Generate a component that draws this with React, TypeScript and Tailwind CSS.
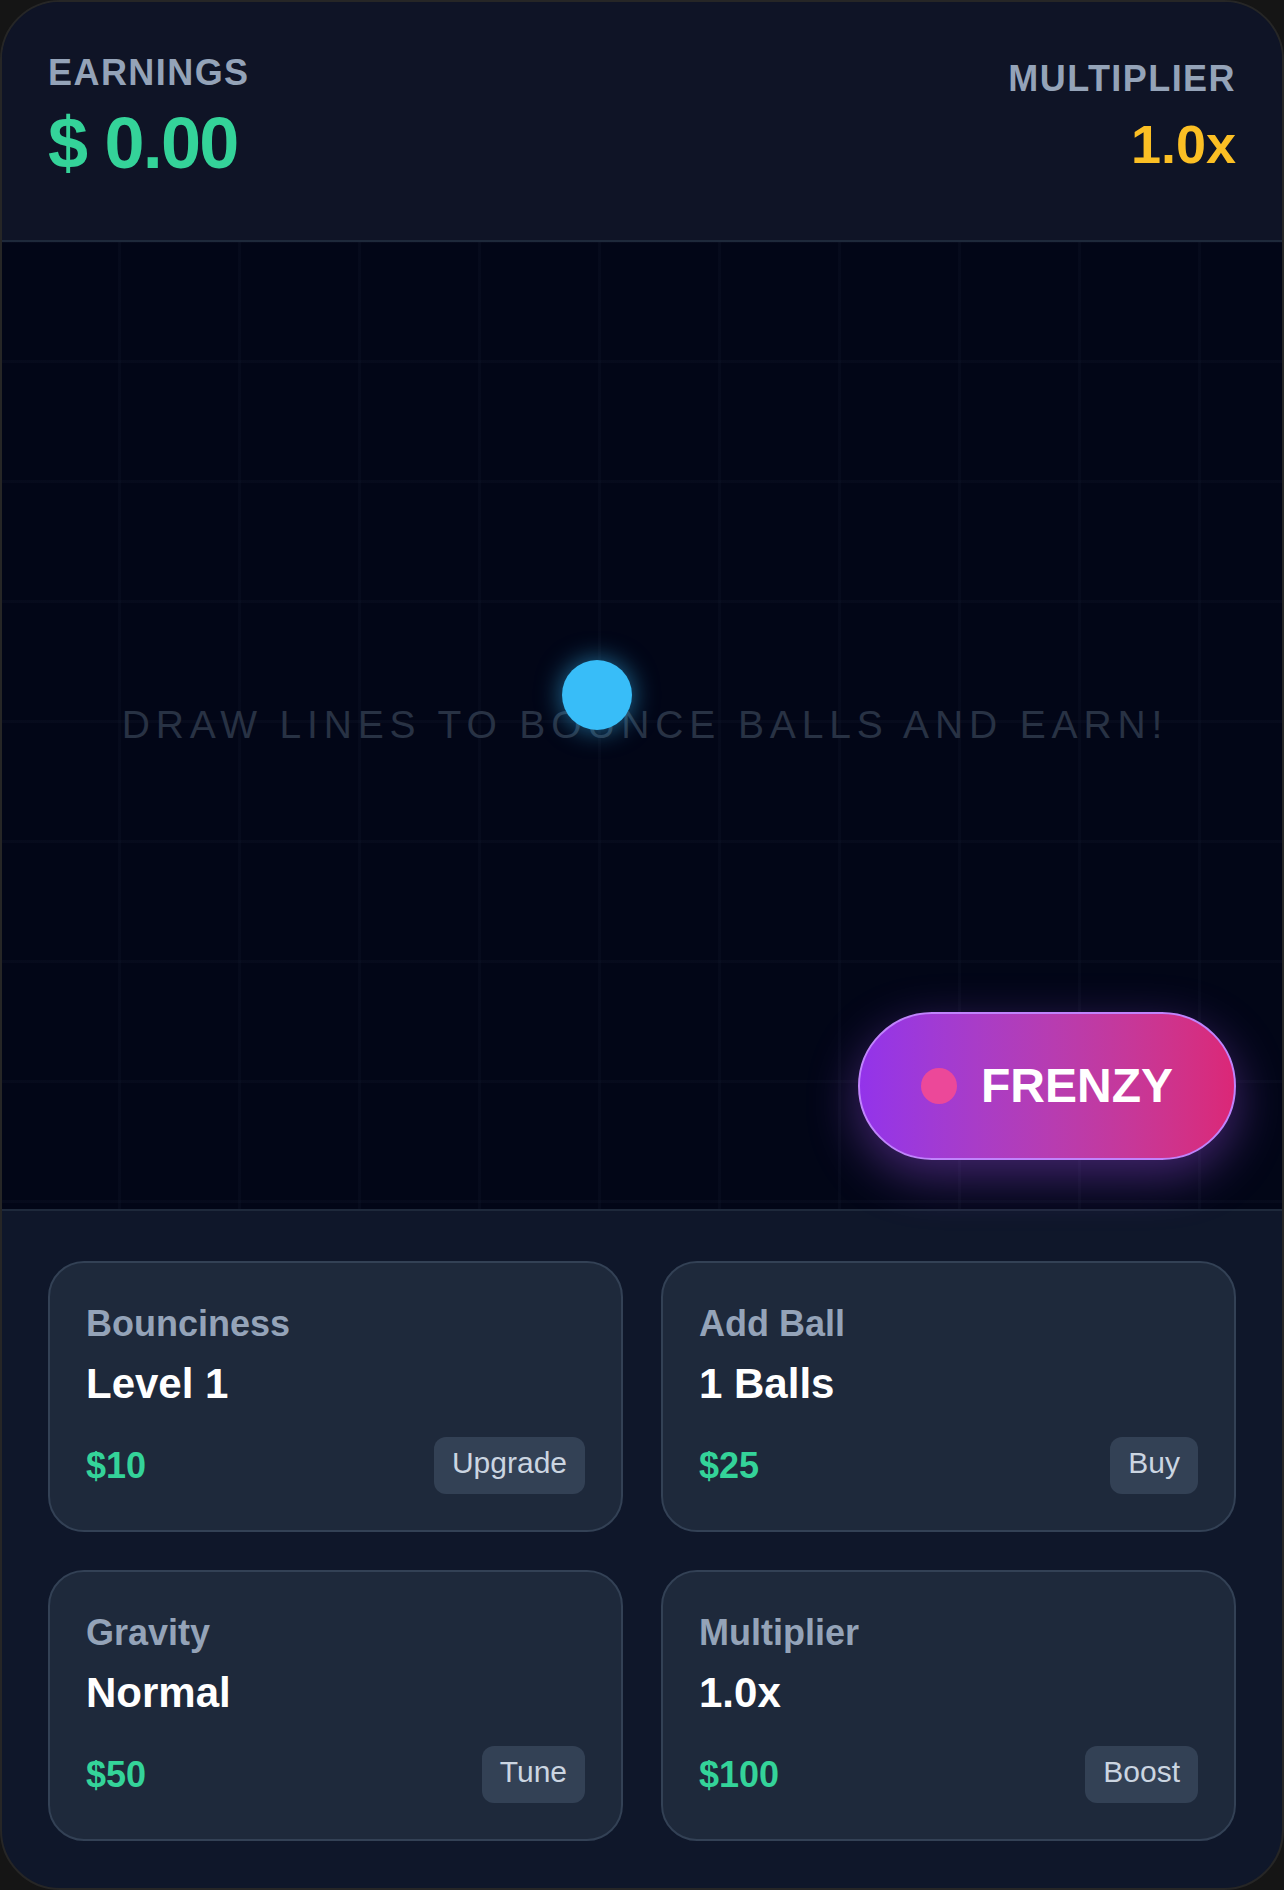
const FONT = { fontFamily: '"Liberation Sans", Arial, sans-serif' };

type Upgrade = {
  label: string;
  value: string;
  price: string;
  action: string;
};

const UPGRADES: Upgrade[] = [
  { label: 'Bounciness', value: 'Level 1', price: '$10', action: 'Upgrade' },
  { label: 'Add Ball', value: '1 Balls', price: '$25', action: 'Buy' },
  { label: 'Gravity', value: 'Normal', price: '$50', action: 'Tune' },
  { label: 'Multiplier', value: '1.0x', price: '$100', action: 'Boost' },
];

function UpgradeCard({ upgrade }: { upgrade: Upgrade }) {
  return (
    <div className="flex flex-col rounded-[36px] border-2 border-[#334155] bg-[#1e293b] px-[36px] pb-[36px] pt-[41px]">
      <div className="text-[36px] font-bold leading-[40px] text-[#94a3b8]">{upgrade.label}</div>
      <div className="mt-[16px] text-[42px] font-bold leading-[48px] text-white">{upgrade.value}</div>
      <div className="mt-[29px] flex items-center justify-between">
        <span className="text-[36px] font-bold leading-[40px] text-[#34d399]">{upgrade.price}</span>
        <button
          type="button"
          className="flex h-[57px] items-center rounded-[12px] bg-[#334155] px-[18px] pb-[6px] text-[30px] leading-none text-[#cbd5e1]"
        >
          {upgrade.action}
        </button>
      </div>
    </div>
  );
}

export default function App() {
  return (
    <div className="min-h-screen bg-[#151515]" style={FONT}>
      <div className="flex h-[1890px] w-[1284px] flex-col overflow-hidden rounded-[60px] border-2 border-[#262626] bg-[#0f172a]">
        {/* header */}
        <div className="flex h-[240px] shrink-0 items-start justify-between border-b-2 border-[#1e293b] bg-[#0f1426] px-[46px]">
          <div className="mt-[51px]">
            <div className="text-[36px] font-bold leading-[40px] tracking-[0.04em] text-[#94a3b8]">EARNINGS</div>
            <div className="mt-[10px] text-[72px] font-bold leading-[80px] tracking-tight text-[#34d399]">$ 0.00</div>
          </div>
          <div className="mt-[57px] flex flex-col items-end">
            <div className="text-[36px] font-bold leading-[40px] tracking-[0.04em] text-[#94a3b8]">MULTIPLIER</div>
            <div className="mt-[15px] text-[54px] font-bold leading-[60px] text-[#fbbf24]">1.0x</div>
          </div>
        </div>

        {/* play field */}
        <div className="relative h-[969px] shrink-0 border-b-2 border-[#1e293b] bg-[#020617] bg-[linear-gradient(to_right,rgba(30,41,59,0.14)_3px,transparent_3px),linear-gradient(to_bottom,rgba(30,41,59,0.14)_3px,transparent_3px)] bg-[size:120px_120px] bg-[position:-4px_-2px]">
          <div className="absolute inset-0 flex items-center justify-center">
            <span className="pl-[0.15em] text-[39px] tracking-[0.15em] text-[#283244]">
              DRAW LINES TO BOUNCE BALLS AND EARN!
            </span>
          </div>
          <div className="absolute left-[560px] top-[418px] h-[70px] w-[70px] rounded-full bg-[#38bdf8] shadow-[0_0_26px_rgba(56,189,248,0.6)]" />
          <button
            type="button"
            className="absolute bottom-[49px] right-[46px] flex h-[148px] w-[378px] items-center gap-[24px] rounded-full border-2 border-[#c084fc] bg-linear-to-r from-[#9333ea] to-[#db2777] pl-[61px] shadow-[0_16px_50px_rgba(168,85,247,0.4)]"
          >
            <span className="h-[36px] w-[36px] rounded-full bg-[#ec4899]" />
            <span className="text-[48px] font-bold leading-none text-white">FRENZY</span>
          </button>
        </div>

        {/* upgrades */}
        <div className="grid flex-1 grid-cols-2 content-start gap-x-[38px] gap-y-[38px] px-[46px] pt-[50px]">
          {UPGRADES.map((u) => (
            <UpgradeCard key={u.label} upgrade={u} />
          ))}
        </div>
      </div>
    </div>
  );
}
